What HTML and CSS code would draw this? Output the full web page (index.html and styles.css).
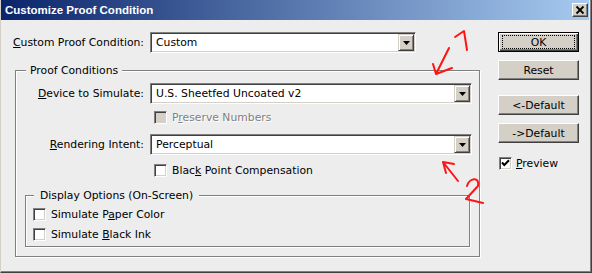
FILE: index.html
```html
<!DOCTYPE html>
<html lang="en">
<head>
    <meta charset="UTF-8">
    <title>Customize Proof Condition</title>
    <link rel="stylesheet" href="styles.css">
</head>
<body>
    <div class="dialog">
        <div class="titlebar">
            <span class="title">Customize Proof Condition</span>
            <span class="close">
                <svg width="14" height="12" viewBox="0 0 14 12"><path d="M3.5,2.5 L10.5,9.5 M10.5,2.5 L3.5,9.5" stroke="#000" stroke-width="1.8" fill="none"/></svg>
            </span>
        </div>
        <div class="content">
            <div class="main">
                <div class="field">
                    <span class="field_label"><u>C</u>ustom Proof Condition:</span>
                    <div class="combo combo_short">
                        <span class="combo_text">Custom</span>
                        <span class="combo_arrow"><svg width="7" height="4" viewBox="0 0 7 4"><path d="M0,0 H7 L3.5,4 Z" fill="#000"/></svg></span>
                    </div>
                </div>

                <fieldset class="group group_proof">
                    <legend>Proof Conditions</legend>
                    <div class="field field_device">
                        <span class="field_label"><u>D</u>evice to Simulate:</span>
                        <div class="combo combo_long">
                            <span class="combo_text">U.S. Sheetfed Uncoated v2</span>
                            <span class="combo_arrow"><svg width="7" height="4" viewBox="0 0 7 4"><path d="M0,0 H7 L3.5,4 Z" fill="#000"/></svg></span>
                        </div>
                    </div>
                    <div class="check_row check_preserve disabled">
                        <span class="check check_off"></span>
                        <span class="check_text">P<u>r</u>eserve Numbers</span>
                    </div>
                    <div class="field field_intent">
                        <span class="field_label"><u>R</u>endering Intent:</span>
                        <div class="combo combo_long">
                            <span class="combo_text">Perceptual</span>
                            <span class="combo_arrow"><svg width="7" height="4" viewBox="0 0 7 4"><path d="M0,0 H7 L3.5,4 Z" fill="#000"/></svg></span>
                        </div>
                    </div>
                    <div class="check_row check_black">
                        <span class="check"></span>
                        <span class="check_text">Blac<u>k</u> Point Compensation</span>
                    </div>

                    <fieldset class="group group_display">
                        <legend>Display Options (On-Screen)</legend>
                        <div class="check_row check_paper">
                            <span class="check"></span>
                            <span class="check_text">Simulate P<u>a</u>per Color</span>
                        </div>
                        <div class="check_row check_ink">
                            <span class="check"></span>
                            <span class="check_text">Simulate <u>B</u>lack Ink</span>
                        </div>
                    </fieldset>
                </fieldset>
            </div>

            <div class="side">
                <button class="btn btn_default"><span class="btn_focus">OK</span></button>
                <button class="btn btn_reset">Reset</button>
                <button class="btn btn_gap">&lt;-Default</button>
                <button class="btn btn_next">-&gt;Default</button>
                <div class="check_row check_preview">
                    <span class="check">
                        <svg width="11" height="11" viewBox="0 0 11 11"><path d="M2,4.5 L4.3,7 L9,2.3" stroke="#000" stroke-width="2" fill="none"/></svg>
                    </span>
                    <span class="check_text"><u>P</u>review</span>
                </div>
            </div>
        </div>

        <!-- hand drawn notes on top of the dialog -->
        <svg class="marks" width="592" height="273" viewBox="0 0 592 273">
            <g stroke="#ff1414" stroke-width="2" fill="none" stroke-linecap="round" stroke-linejoin="round">
                <path d="M455,37 L464,31 L467,50"/>
                <path d="M449,48 L436,74 M433,64 L436,74 L452,68"/>
                <path d="M454,164 L443,162 L446,173 M443,162 L458,181"/>
                <path d="M467,186 C469,178 480,176 478,186 L466,199 L483,203"/>
            </g>
        </svg>
    </div>
</body>
</html>
```

FILE: styles.css
```css
body{
    margin: 0;
    font-family: "DejaVu Sans", Verdana, sans-serif;
    font-size: 10.8px;
    color: #000;
}
.dialog{
    position: relative;
    width: 592px;
    height: 273px;
    box-sizing: border-box;
    background: #ededed;
    border-left: 1px solid #d4d0c8;
    border-right: 1px solid #404040;
    border-bottom: 1px solid #404040;
    box-shadow: inset -1px -1px 0 #808080;
}
.titlebar{
    width: 588px;
    height: 20px;
    box-sizing: border-box;
    padding-left: 4px;
    display: flex;
    align-items: center;
    justify-content: space-between;
    background: linear-gradient(to right, #0a246a, #a6caf0);
}
.title{
    color: #fff;
    font-family: "Liberation Sans", Arial, sans-serif;
    font-weight: bold;
    font-size: 11.5px;
}
.close{
    width: 16px;
    height: 14px;
    margin-right: 1px;
    box-sizing: border-box;
    background: #d4d0c8;
    border: 1px solid;
    border-color: #fff #404040 #404040 #fff;
    box-shadow: inset -1px -1px 0 #808080;
    display: flex;
    align-items: center;
    justify-content: center;
}
.content{
    display: flex;
    padding: 12px 0 0 11px;
}
.main{
    width: 468px;
}
.side{
    margin-left: 18px;
    width: 81px;
    display: flex;
    flex-direction: column;
}

/* label + combo rows */
.field{
    display: flex;
    align-items: center;
    height: 21px;
}
.field_label{
    width: 132px;
    margin-right: 6px;
    text-align: right;
    white-space: nowrap;
}
.group_proof .field_label{
    width: 128px;
}
.combo{
    box-sizing: border-box;
    height: 21px;
    padding: 0 1px 0 5px;
    background: #fff;
    border: 1px solid;
    border-color: #808080 #fff #fff #808080;
    box-shadow: inset 1px 1px 0 #404040, inset -1px -1px 0 #d4d0c8;
    display: flex;
    align-items: center;
}
.combo_short{ width: 266px; }
.combo_long{ width: 322px; }
.combo_text{
    flex: 1;
    white-space: nowrap;
}
.combo_arrow{
    width: 16px;
    height: 17px;
    box-sizing: border-box;
    background: #d4d0c8;
    border: 1px solid;
    border-color: #d4d0c8 #404040 #404040 #d4d0c8;
    box-shadow: inset 1px 1px 0 #fff, inset -1px -1px 0 #808080;
    display: flex;
    align-items: center;
    justify-content: center;
}

/* group boxes */
.group{
    margin: 0;
    padding: 0;
    min-inline-size: auto;
    box-sizing: border-box;
    border: 1px solid #808080;
    box-shadow: 1px 1px 0 #fff, inset 1px 1px 0 #fff;
}
.group legend{
    line-height: 13px;
    background: #ededed;
}
.group_proof{
    width: 465px;
    margin: 11px 0 0 3px;
    padding-bottom: 9px;
}
.group_proof > legend{
    margin-left: 10px;
    padding: 0 4px;
}
.group_display{
    width: 445px;
    margin: 12px 0 0 9px;
    padding-bottom: 5px;
}
.group_display > legend{
    margin-left: 8px;
    padding: 0 6px 0 6px;
}
.field_device{ margin-top: 6px; }
.field_intent{ margin-top: 10px; }

/* check boxes */
.check_row{
    display: flex;
    align-items: center;
    height: 13px;
    white-space: nowrap;
}
.check{
    width: 13px;
    height: 13px;
    flex: none;
    box-sizing: border-box;
    margin-right: 5px;
    background: #fff;
    border: 1px solid;
    border-color: #808080 #fff #fff #808080;
    box-shadow: inset 1px 1px 0 #404040, inset -1px -1px 0 #d4d0c8;
    display: flex;
    align-items: center;
    justify-content: center;
}
.check_off{ background: #d4d0c8; }
.disabled .check_text{
    color: #808080;
    text-shadow: 1px 1px 0 #fff;
}
.check_preserve{ margin: 7px 0 0 138px; }
.check_black{ margin: 9px 0 0 138px; }
.check_paper{ margin: 6px 0 0 7px; }
.check_ink{ margin: 7px 0 0 7px; }
.check_preview{ margin: 14px 0 0 1px; }
.check_preview .check{ margin-right: 4px; }

/* push buttons */
.btn{
    width: 81px;
    height: 20px;
    box-sizing: border-box;
    padding: 0;
    font: inherit;
    color: #000;
    background: #d4d0c8;
    border: 1px solid;
    border-color: #fff #404040 #404040 #fff;
    box-shadow: inset -1px -1px 0 #808080;
    display: flex;
    align-items: center;
    justify-content: center;
}
.btn_default{
    border-color: #000;
    padding: 2px 3px;
    align-items: stretch;
    box-shadow: inset 1px 1px 0 #fff, inset -1px -1px 0 #404040, inset -2px -2px 0 #808080;
}
.btn_focus{
    flex: 1;
    border: 1px dotted #000;
    display: flex;
    align-items: center;
    justify-content: center;
}
.btn_reset{ margin-top: 8px; }
.btn_gap{ margin-top: 15px; }
.btn_next{ margin-top: 8px; }

.marks{
    position: absolute;
    left: -1px;
    top: 0;
    pointer-events: none;
}
```
